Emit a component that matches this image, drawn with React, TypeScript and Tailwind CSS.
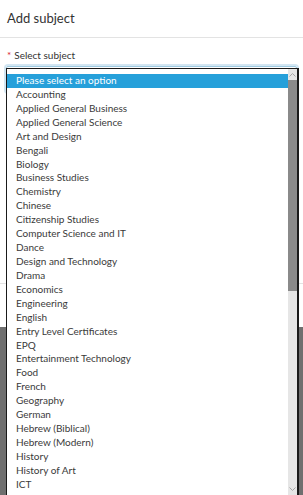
const subjects = [
  "Please select an option",
  "Accounting",
  "Applied General Business",
  "Applied General Science",
  "Art and Design",
  "Bengali",
  "Biology",
  "Business Studies",
  "Chemistry",
  "Chinese",
  "Citizenship Studies",
  "Computer Science and IT",
  "Dance",
  "Design and Technology",
  "Drama",
  "Economics",
  "Engineering",
  "English",
  "Entry Level Certificates",
  "EPQ",
  "Entertainment Technology",
  "Food",
  "French",
  "Geography",
  "German",
  "Hebrew (Biblical)",
  "Hebrew (Modern)",
  "History",
  "History of Art",
  "ICT",
];

const App = () => {
  return (
    <div className="relative w-[303px] h-[495px] overflow-hidden bg-[#6f6f6f] font-['Lato',sans-serif] text-[#333333]">
      {/* modal */}
      <div className="flex flex-col h-[327px] bg-white">
        <div className="flex items-center h-[38px] px-[7px] border-b border-[#e3e3e3]">
          <h2 className="text-[13px] leading-none">Add subject</h2>
        </div>
        <div className="flex flex-col px-[7px] pt-[10px] h-[245px]">
          <label className="text-[10px] leading-[14px]">
            <span className="text-[#d9232e] mr-[3px]">*</span>Select subject
          </label>
          <div className="mt-[4px] h-[26px] -mx-[1px] rounded-[2px] border border-[#9ecae1] shadow-[0_0_0_2px_#d3e6f2]" />
        </div>
        <div className="flex-1 border-t border-[#e3e3e3]" />
      </div>

      {/* open select list */}
      <div className="absolute left-[6px] top-[68px] w-[293px] bottom-0 flex bg-white border border-[#1a1a1a] border-r-2 border-b-0">
        <ul className="flex-1 pt-[5px] text-[10px]">
          {subjects.map((s, i) => (
            <li
              key={s}
              className={`h-[13.93px] leading-[13.93px] pl-[9px] whitespace-nowrap ${
                i === 0 ? "bg-[#26a0da] text-white" : "text-[#3a3a3a]"
              }`}
            >
              {s}
            </li>
          ))}
        </ul>
        <div className="flex flex-col w-[9px] bg-[#e6e6e6]">
          <div className="flex items-center justify-center h-[11px]">
            <svg width="7" height="4" viewBox="0 0 7 4">
              <path d="M0.5 3.5 L3.5 0.5 L6.5 3.5" fill="none" stroke="#a6a6a6" strokeWidth="1" />
            </svg>
          </div>
          <div className="h-[211px] bg-[#8a8a8a]" />
          <div className="flex-1" />
          <div className="flex items-center justify-center h-[12px]">
            <svg width="7" height="4" viewBox="0 0 7 4">
              <path d="M0.5 0.5 L3.5 3.5 L6.5 0.5" fill="none" stroke="#a6a6a6" strokeWidth="1" />
            </svg>
          </div>
        </div>
      </div>
    </div>
  );
};

export default App;
